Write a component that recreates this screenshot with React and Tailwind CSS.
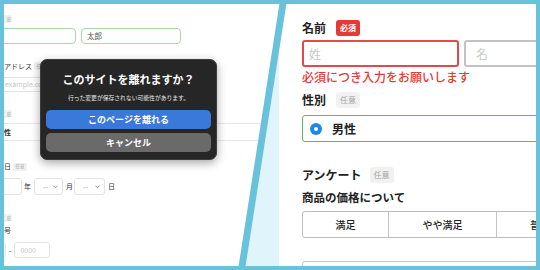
function SmallBadge({ className = "" }) {
  return (
    <span
      className={
        "flex h-[8px] w-[14px] shrink-0 items-center justify-center rounded-[2px] bg-[#f0f0f0] text-[4.5px] leading-none text-[#aaa] " +
        className
      }
    >
      任意
    </span>
  );
}

// badge whose left half is cropped off the panel edge
function EdgeBadge({ className = "" }) {
  return (
    <span
      className={
        "flex h-[8px] w-[8px] shrink-0 items-center justify-end rounded-r-[2px] bg-[#f0f0f0] pr-[1px] text-[4.5px] leading-none text-[#aaa] " +
        className
      }
    >
      意
    </span>
  );
}

function MiniSelect({ width }) {
  return (
    <div
      className={
        "flex h-full items-center justify-between rounded-[3px] border border-[#e3e3e3] pl-[8px] pr-[4px] text-[7px] text-[#999] " +
        width
      }
    >
      <span>--</span>
      <svg width="5" height="4" viewBox="0 0 5 4">
        <path d="M0.6 0.8 L2.5 2.8 L4.4 0.8" fill="none" stroke="#888" strokeWidth="0.9" />
      </svg>
    </div>
  );
}

function LeftForm() {
  return (
    <div className="relative h-full w-[275px] shrink-0 overflow-hidden bg-white text-[7px] leading-none text-[#333]">
      <div className="flex flex-col items-start">
        <EdgeBadge className="mt-[11px]" />

        <div className="mt-[5px] flex gap-[5px]">
          <div className="ml-[-28px] h-[16px] w-[100px] rounded-[4px] border border-[#a9d8a9]" />
          <div className="flex h-[16px] w-[100px] items-center rounded-[4px] border border-[#a9d8a9] pl-[5px] text-[7.5px] text-[#555]">
            太郎
          </div>
        </div>

        <div className="mt-[17px] flex h-[10px] items-center">
          <span>アドレス</span>
          <SmallBadge className="ml-[2px]" />
        </div>

        <div className="ml-[-30px] mt-[6px] flex h-[15px] w-[220px] items-center rounded-[3px] border border-[#e3e3e3] pl-[30px] text-[#c4c4c4]">
          example.com
        </div>

        <EdgeBadge className="mt-[18px]" />

        <div className="ml-[-30px] mt-[5px] flex h-[18px] w-[288px] items-center rounded-[3px] border border-[#e6e6e6] pl-[29px] font-bold">
          <span>性</span>
        </div>

        <div className="mt-[21px] flex h-[9px] items-center">
          <span>日</span>
          <SmallBadge className="ml-[2px]" />
        </div>

        <div className="mt-[7px] flex h-[17px] items-center">
          <div className="ml-[-22px] h-full w-[40px] rounded-[3px] border border-[#e3e3e3]" />
          <span className="ml-[2px] mr-[3px]">年</span>
          <MiniSelect width="w-[29px]" />
          <span className="ml-[3px] mr-[1px]">月</span>
          <MiniSelect width="w-[31px]" />
          <span className="ml-[3px]">日</span>
        </div>

        <EdgeBadge className="mt-[19px]" />

        <div className="mt-[5px] h-[9px]">号</div>

        <div className="mt-[6px] flex h-[16px] items-center">
          <div className="ml-[-40px] h-full w-[42px] rounded-[3px] border border-[#e3e3e3]" />
          <span className="mx-[3px]">-</span>
          <div className="flex h-full w-[36px] items-center rounded-[3px] border border-[#e3e3e3] pl-[5px] text-[#c4c4c4]">
            0000
          </div>
        </div>
      </div>

      {/* leave-site dialog */}
      <div className="absolute left-[36px] top-[55px] flex h-[101px] w-[177px] flex-col items-center rounded-[7px] border border-[#3d3d3d] bg-[#262626] px-[5px] pt-[12px] shadow-[0_3px_10px_rgba(0,0,0,0.35)]">
        <div className="flex h-[14px] items-center text-[11px] font-bold text-white">このサイトを離れますか？</div>
        <div className="mt-[8px] flex h-[8px] items-center text-[5.8px] text-[#e8e8e8]">
          行った変更が保存されない可能性があります。
        </div>
        <button className="mt-[8px] flex h-[19px] w-full items-center justify-center rounded-[5px] bg-[#3a78d9] text-[9px] font-bold text-white">
          このページを離れる
        </button>
        <button className="mt-[4px] flex h-[19px] w-full items-center justify-center rounded-[5px] bg-[#6a6a6a] text-[9px] font-bold text-white">
          キャンセル
        </button>
      </div>
    </div>
  );
}

function Badge({ required }) {
  return required ? (
    <span className="flex h-[16px] w-[24px] items-center justify-center rounded-[3px] bg-[#e53935] text-[8px] font-bold text-white">
      必須
    </span>
  ) : (
    <span className="flex h-[16px] w-[24px] items-center justify-center rounded-[3px] bg-[#f1f1f1] text-[8px] text-[#a5a5a5]">
      任意
    </span>
  );
}

function RightForm() {
  return (
    <div className="h-full min-w-0 flex-1 overflow-hidden bg-white pl-[23px] pt-[16px] text-[#222]">
      <div className="flex h-[16px] items-center gap-[10px]">
        <span className="text-[12px] font-bold leading-none">名前</span>
        <Badge required />
      </div>
      <div className="mt-[4px] flex gap-[5px]">
        <div className="flex h-[27px] w-[157px] shrink-0 items-center rounded-[3px] border-2 border-[#e24a4a] pl-[5px] text-[12px] text-[#c8c8c8]">
          姓
        </div>
        <div className="flex h-[27px] w-[160px] shrink-0 items-center rounded-[3px] border-2 border-[#c2c2c2] pl-[10px] text-[12px] text-[#c8c8c8]">
          名
        </div>
      </div>
      <p className="mt-[2px] h-[15px] whitespace-nowrap text-[12px] font-medium leading-[15px] text-[#e53935]">
        必須につき入力をお願いします
      </p>

      <div className="mt-[8px] flex h-[16px] items-center gap-[10px]">
        <span className="text-[12px] font-bold leading-none">性別</span>
        <Badge />
      </div>
      <div className="mt-[7px] flex h-[27px] w-[300px] items-center gap-[10px] rounded-[3px] border-[1.5px] border-[#66b366] pl-[7px]">
        <span className="flex h-[12px] w-[12px] items-center justify-center rounded-full bg-[#1e88e5]">
          <span className="h-[4px] w-[4px] rounded-full bg-white" />
        </span>
        <span className="text-[12px] font-bold leading-none">男性</span>
      </div>

      <div className="mt-[25px] flex h-[16px] items-center gap-[8px]">
        <span className="text-[12px] font-bold leading-none">アンケート</span>
        <Badge />
      </div>
      <div className="mt-[7px] h-[15px] whitespace-nowrap text-[11.5px] font-bold leading-[15px]">商品の価格について</div>

      <div className="mt-[6px] flex h-[27px] w-[300px] rounded-[3px] border-[1.5px] border-[#bdbdbd] text-[10px] font-medium">
        <div className="flex w-[86px] shrink-0 items-center justify-center border-r-[1.5px] border-[#c4c4c4]">満足</div>
        <div className="flex w-[108px] shrink-0 items-center justify-center border-r-[1.5px] border-[#c4c4c4]">やや満足</div>
        <div className="flex w-[86px] shrink-0 items-center justify-center">普通</div>
      </div>

      <div className="mt-[23px] h-[30px] w-[300px] rounded-[3px] border-[1.5px] border-[#c4c4c4]" />
    </div>
  );
}

export default function App() {
  return (
    <div className="relative flex h-[270px] w-[540px] overflow-hidden bg-[#69c2dc] p-[4px] font-['Noto_Sans_CJK_JP',sans-serif]">
      <LeftForm />
      <RightForm />
      <svg
        className="pointer-events-none absolute inset-0"
        width="540"
        height="270"
        viewBox="0 0 540 270"
      >
        <polygon points="279,52 279,266 245.6,266" fill="#e0f4fc" />
        <polygon points="280,0 287,0 245,270 238,270" fill="#69c2dc" />
      </svg>
    </div>
  );
}
